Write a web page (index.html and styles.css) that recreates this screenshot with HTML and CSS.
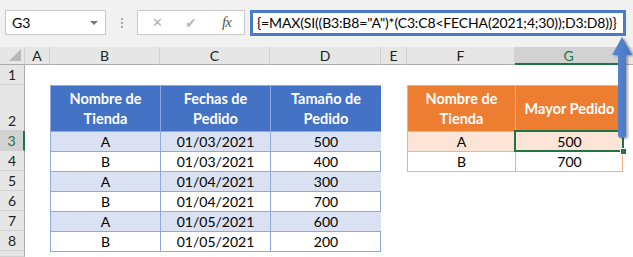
FILE: index.html
```html
<!DOCTYPE html>
<html lang="es">
<head>
    <meta charset="UTF-8">
    <title>MAX SI con varios criterios</title>
    <link rel="stylesheet" href="styles.css">
</head>
<body>
    <div class="toolbar">
        <div class="namebox"><span>G3</span><span class="caret"></span></div>
        <div class="grip"><i></i><i></i><i></i></div>
        <div class="fxbox">
            <span class="fx-cancel">&#x2715;</span>
            <span class="fx-ok">&#x2714;</span>
            <span class="fx-label">fx</span>
        </div>
        <div class="formula">{=MAX(SI((B3:B8="A")*(C3:C8&lt;FECHA(2021;4;30));D3:D8))}</div>
    </div>

    <div class="sheet">
        <div class="corner"></div>
        <div class="colhead">A</div>
        <div class="colhead">B</div>
        <div class="colhead">C</div>
        <div class="colhead">D</div>
        <div class="colhead">E</div>
        <div class="colhead">F</div>
        <div class="colhead active">G</div>
        <div class="colhead last"></div>

        <div class="rowhead r1">1</div>
        <div class="rowhead r2">2</div>
        <div class="rowhead r3 active">3</div>
        <div class="rowhead r4">4</div>
        <div class="rowhead r5">5</div>
        <div class="rowhead r6">6</div>
        <div class="rowhead r7">7</div>
        <div class="rowhead r8">8</div>
        <div class="rowhead r9"></div>

        <div class="xltable blue">
            <div class="th">Nombre de<br>Tienda</div>
            <div class="th">Fechas de<br>Pedido</div>
            <div class="th">Tamaño de<br>Pedido</div>

            <div class="td band">A</div><div class="td band">01/03/2021</div><div class="td band">500</div>
            <div class="td">B</div><div class="td">01/03/2021</div><div class="td">400</div>
            <div class="td band">A</div><div class="td band">01/04/2021</div><div class="td band">300</div>
            <div class="td">B</div><div class="td">01/04/2021</div><div class="td">700</div>
            <div class="td band">A</div><div class="td band">01/05/2021</div><div class="td band">600</div>
            <div class="td">B</div><div class="td">01/05/2021</div><div class="td">200</div>
        </div>

        <div class="xltable orange">
            <div class="th">Nombre de<br>Tienda</div>
            <div class="th">Mayor Pedido</div>
            <div class="td band">A</div><div class="td band selected">500</div>
            <div class="td">B</div><div class="td">700</div>
        </div>
    </div>

    <svg class="arrow" width="24" height="106" viewBox="0 0 24 106">
        <defs>
            <linearGradient id="arrowFill" x1="0" x2="1" y1="0" y2="0">
                <stop offset="0" stop-color="#5a88d2"/>
                <stop offset="1" stop-color="#4474c2"/>
            </linearGradient>
        </defs>
        <path d="M12 2 L22 20 L16 20 L16 100 Q16 103 12 103 Q8 103 8 100 L8 20 L2 20 Z" fill="url(#arrowFill)"/>
    </svg>
</body>
</html>
```

FILE: styles.css
```css
* {
    box-sizing: border-box;
}
body {
    margin: 0;
    width: 633px;
    height: 257px;
    overflow: hidden;
    background: #fff;
    font-family: Lato, "Liberation Sans", sans-serif;
    color: #000;
    position: relative;
}

/* formula bar */
.toolbar {
    height: 47px;
    background: #f1f1f1;
    display: flex;
    align-items: flex-start;
    padding: 10px 0 0 5px;
}
.namebox {
    width: 101px;
    height: 25px;
    background: #fff;
    border: 1px solid #c9c9c9;
    display: flex;
    align-items: center;
    justify-content: space-between;
    padding: 0 7px 0 6px;
    font-size: 14px;
}
.caret {
    width: 0;
    height: 0;
    border-left: 4px solid transparent;
    border-right: 4px solid transparent;
    border-top: 4px solid #777;
}
.grip {
    width: 31px;
    height: 25px;
    display: flex;
    flex-direction: column;
    align-items: center;
    justify-content: center;
    gap: 2px;
}
.grip i {
    width: 2px;
    height: 2px;
    background: #a8a8a8;
}
.fxbox {
    width: 108px;
    height: 25px;
    background: #fff;
    border: 1px solid #c9c9c9;
    display: flex;
    align-items: center;
    padding: 0 8px 0 14px;
}
.fx-cancel {
    color: #b0b0b0;
    font-size: 13px;
    font-family: "DejaVu Sans", sans-serif;
    width: 33px;
}
.fx-ok {
    color: #b8b8b8;
    font-size: 14px;
    font-family: "DejaVu Sans", sans-serif;
    width: 37px;
}
.fx-label {
    font-family: "Liberation Serif", serif;
    font-style: italic;
    font-size: 15px;
    color: #555;
    letter-spacing: -1px;
}
.formula {
    margin-left: 5px;
    width: 376px;
    height: 26px;
    border: 3px solid #4a7bc8;
    background: #fff;
    font-size: 14px;
    letter-spacing: -0.15px;
    line-height: 20px;
    padding-left: 4px;
    white-space: nowrap;
    overflow: hidden;
}

/* worksheet grid */
.sheet {
    display: grid;
    grid-template-columns: 25px 25px 110px 110px 111px 26px 108px 108px 1fr;
    grid-template-rows: 18px 20px 46px 20px 20px 20px 20px 20px 20px 1fr;
    height: 210px;
    font-size: 14px;
}
.corner {
    background: #e6e6e6;
    border-right: 1px solid #d0d0d0;
    border-bottom: 1px solid #ababab;
    position: relative;
}
.corner::after {
    content: "";
    position: absolute;
    right: 3px;
    bottom: 3px;
    border-left: 12px solid transparent;
    border-bottom: 12px solid #b8b8b8;
}
.colhead {
    background: #e6e6e6;
    border-right: 1px solid #d0d0d0;
    border-bottom: 1px solid #ababab;
    display: flex;
    align-items: center;
    justify-content: center;
    color: #222;
    font-size: 14px;
}
.colhead.last {
    border-right: none;
}
.colhead.active {
    background: #d2d2d2;
    color: #217346;
    border-bottom: 2px solid #217346;
}
.rowhead {
    grid-column: 1;
    background: #e6e6e6;
    border-right: 1px solid #ababab;
    border-bottom: 1px solid #d0d0d0;
    display: flex;
    align-items: flex-end;
    justify-content: center;
    padding-bottom: 1px;
    color: #222;
}
.rowhead.active {
    background: #d2d2d2;
    color: #217346;
    border-right: 2px solid #217346;
}
.r1 { grid-row: 2; }
.r2 { grid-row: 3; }
.r3 { grid-row: 4; }
.r4 { grid-row: 5; }
.r5 { grid-row: 6; }
.r6 { grid-row: 7; }
.r7 { grid-row: 8; }
.r8 { grid-row: 9; }
.r9 { grid-row: 10; }

/* formatted tables */
.xltable {
    display: grid;
    grid-template-rows: 46px;
    grid-auto-rows: 20px;
    align-self: start;
    height: max-content;
}
.xltable.blue {
    grid-column: 3 / 6;
    grid-row: 3 / 10;
    grid-template-columns: 110px 110px 111px;
    border-right: 1px solid #8ea9db;
    border-bottom: 1px solid #8ea9db;
}
.xltable.orange {
    grid-column: 7 / 9;
    grid-row: 3 / 6;
    grid-template-columns: 108px 108px;
    border-right: 1px solid #f4b084;
    border-bottom: 1px solid #f4b084;
}
.th, .td {
    display: flex;
    align-items: center;
    justify-content: center;
    text-align: center;
}
.th {
    color: #fff;
    font-weight: bold;
    font-size: 14.5px;
    line-height: 20px;
}
.blue .th, .blue .td {
    border-left: 1px solid #8ea9db;
    border-top: 1px solid #8ea9db;
}
.blue .th {
    background: #4472c4;
}
.blue .band {
    background: #d9e1f2;
}
.orange .th, .orange .td {
    border-left: 1px solid #f4b084;
    border-top: 1px solid #f4b084;
}
.orange .th {
    background: #ed7d31;
}
.orange .band {
    background: #fce4d6;
}
.selected {
    position: relative;
    outline: 2px solid #217346;
    outline-offset: -1px;
}
.selected::after {
    content: "";
    position: absolute;
    right: -4px;
    bottom: -4px;
    width: 5px;
    height: 5px;
    background: #217346;
    border: 1px solid #fff;
}

.arrow {
    position: absolute;
    left: 610px;
    top: 35px;
    filter: drop-shadow(2px 1px 1px rgba(0, 0, 0, 0.35));
}
```
